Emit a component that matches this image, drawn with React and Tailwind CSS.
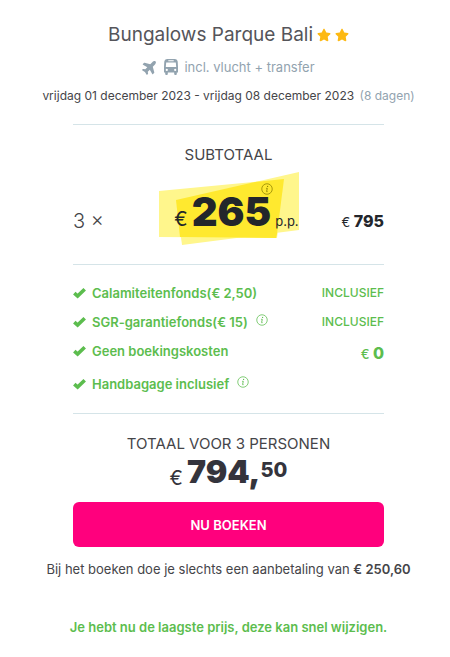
import React from "react";
import { FaPlane, FaStar } from "react-icons/fa";

const extras = [
  { label: "Calamiteitenfonds", amount: "(€ 2,50)", value: "INCLUSIEF" },
  { label: "SGR-garantiefonds", amount: "(€ 15)", value: "INCLUSIEF", info: true },
  { label: "Geen boekingskosten", price: "0" },
  { label: "Handbagage inclusief", info: true },
];

function InfoIcon({ className }) {
  return (
    <svg viewBox="0 0 24 24" className={className} fill="none" stroke="currentColor" aria-hidden="true">
      <circle cx="12" cy="12" r="10.5" strokeWidth="1.5" />
      <circle cx="13.2" cy="6.8" r="1.3" fill="currentColor" stroke="none" />
      <path d="M10.2 10.6h2.4l-1.4 6.2q-.2 1 .8.8l1.2-.4" strokeWidth="1.7" />
    </svg>
  );
}

function BusIcon({ className }) {
  return (
    <svg viewBox="0 0 14 16" className={className} fill="currentColor" aria-hidden="true">
      <path
        fillRule="evenodd"
        d="M3 0h8q2.5 0 2.7 2.5L14 8v5.5h-1.2V15q0 1-1 1h-.6q-1 0-1-1v-1.5H3.8V15q0 1-1 1h-.6q-1 0-1-1v-1.5H0V8l.3-5.5Q.5 0 3 0ZM4.3 1.3v1h5.4v-1ZM2.2 3.5 1.8 8h10.4l-.4-4.5ZM2.8 9.8a1.1 1.1 0 1 0 0 2.2 1.1 1.1 0 0 0 0-2.2Zm8.4 0a1.1 1.1 0 1 0 0 2.2 1.1 1.1 0 0 0 0-2.2Z"
      />
    </svg>
  );
}

function CheckIcon({ className }) {
  return (
    <svg viewBox="0 0 13 12" className={className} fill="none" stroke="currentColor" aria-hidden="true">
      <path d="M1.3 6.1 4.6 9.1 11.7 2.2" strokeWidth="3.6" />
    </svg>
  );
}

// Two overlapping marker strokes behind the price
function Highlight() {
  return (
    <svg viewBox="0 0 140 73" className="absolute inset-0 h-full w-full" aria-hidden="true">
      <polygon points="0,19 125,7 118,66 0,65" fill="#fff68c" />
      <polygon points="17,28 140,0 140,58 23,73" fill="#fff68c" />
      <polygon points="17,28 96,10 125,7 118,62 117,66 21,65" fill="#ffe92f" />
    </svg>
  );
}

export default function App() {
  return (
    <main className="min-h-screen bg-white pt-5 pb-5 pl-[9px] pr-[2px] font-['Inter',sans-serif] text-[13px] leading-5 text-[#454549]">
      <header className="flex flex-col items-center">
        <h1 className="flex items-center gap-1 text-[19px] leading-[30px] text-[#55555a]">
          Bungalows Parque Bali
          <span className="flex gap-1 text-sm text-[#fdb913]">
            <FaStar />
            <FaStar />
          </span>
        </h1>
        <p className="mt-[7px] flex items-center gap-1.5 text-[#92a3af]">
          <FaPlane className="-rotate-45 text-base" />
          <BusIcon className="h-4 w-3.5" />
          incl. vlucht + transfer
        </p>
        <p className="mt-[9px] whitespace-nowrap text-xs leading-5">
          vrijdag 01 december 2023 - vrijdag 08 december 2023{" "}
          <span className="ml-0.5 text-[#92a3af]">(8 dagen)</span>
        </p>
      </header>

      <div className="mx-16">
        <section className="mt-[18px] border-y border-[#d5e4e8] pt-5 pb-[19px]">
          <h2 className="text-center text-[15px]">SUBTOTAAL</h2>
          <div className="mt-[7px] flex items-center justify-between">
            <span className="pt-6 text-xl font-light">3 ×</span>
            <div className="relative ml-3 h-[73px] w-[140px]">
              <Highlight />
              <div className="relative flex h-full items-baseline justify-end pt-5 text-[#23262b]">
                <span className="mr-1 text-xl">€</span>
                <strong className="text-[40px] leading-10 font-black">265</strong>
                <span className="ml-1">p.p.</span>
              </div>
              <InfoIcon className="absolute top-[11px] right-[26px] h-3 w-3 text-[#8d8200]" />
            </div>
            <span className="pt-6 text-[#23262b]">
              € <strong className="text-base font-extrabold">795</strong>
            </span>
          </div>
        </section>

        <ul className="flex flex-col gap-[9px] border-b border-[#d5e4e8] pt-[18px] pb-[19px] font-semibold text-[#5cbd4e]">
          {extras.map((item) => (
            <li key={item.label} className="flex h-5 items-center justify-between last:mt-1">
              <span className="flex items-center">
                <CheckIcon className="mr-1.5 h-3 w-[13px]" />
                {item.label}
                {item.amount}
                {item.info && <InfoIcon className="mb-1 ml-2 h-3 w-3" />}
              </span>
              {item.value && <span className="text-xs font-medium">{item.value}</span>}
              {item.price && (
                <span className="pt-1.5 font-medium">
                  € <strong className="text-base leading-4 font-extrabold">{item.price}</strong>
                </span>
              )}
            </li>
          ))}
        </ul>

        <section className="pt-5 text-center">
          <h2 className="text-[15px]">TOTAAL VOOR 3 PERSONEN</h2>
          <p className="flex justify-center text-[#34343c]">
            <span className="mt-2 mr-1 text-xl leading-8">€</span>
            <strong className="text-[32px] leading-9 font-black">794,</strong>
            <strong className="text-xl leading-8 font-extrabold">50</strong>
          </p>
        </section>

        <button type="button" className="mt-2 h-[45px] w-full rounded-md bg-[#ff007d] font-semibold text-white">
          NU BOEKEN
        </button>
      </div>

      <footer className="text-center">
        <p className="mt-3">
          Bij het boeken doe je slechts een aanbetaling van <strong className="font-semibold">€ 250,60</strong>
        </p>
        <p className="mt-[38px] font-semibold text-[#5cbd4e]">
          Je hebt nu de laagste prijs, deze kan snel wijzigen.
        </p>
      </footer>
    </main>
  );
}
